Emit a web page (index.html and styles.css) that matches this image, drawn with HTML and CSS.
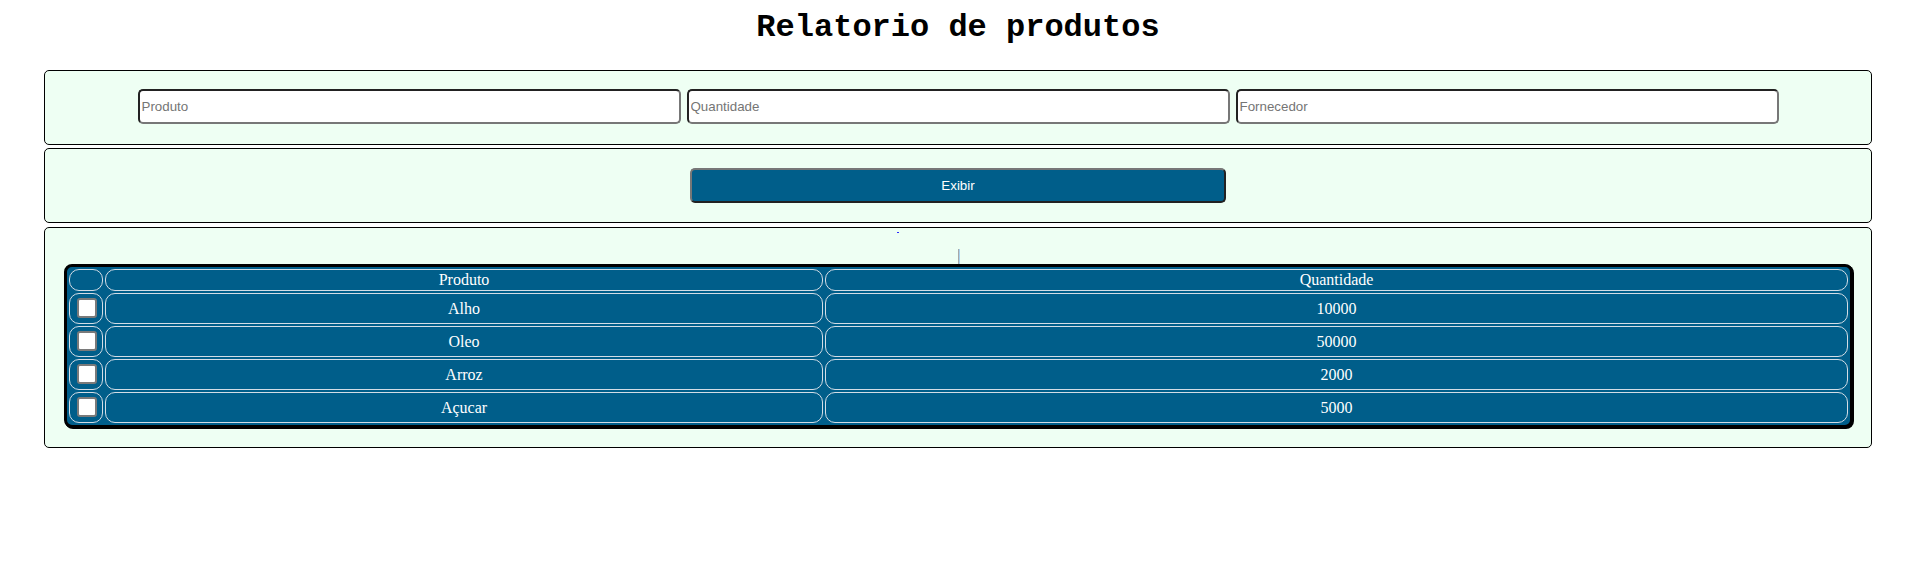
FILE: index.html
```html
<!DOCTYPE html>
<html lang="pt">
<head>
<meta charset="utf-8">
<title>Relatorio de produtos</title>
<link rel="stylesheet" href="styles.css">
</head>
<body>
<div class="page">
  <h1 class="title">Relatorio de produtos</h1>
  <div class="panel panel-inputs">
    <input class="field" type="text" placeholder="Produto">
    <input class="field" type="text" placeholder="Quantidade">
    <input class="field" type="text" placeholder="Fornecedor">
  </div>
  <div class="panel panel-action">
    <button class="btn" type="button">Exibir</button>
  </div>
  <div class="panel panel-table">
    <span class="dot"></span>
    <div class="marker"></div>
    <table class="grid">
      <thead>
        <tr>
          <th class="col-check"></th>
          <th class="col-prod">Produto</th>
          <th>Quantidade</th>
        </tr>
      </thead>
      <tbody>
        <tr><td><input class="check" type="checkbox"></td><td>Alho</td><td>10000</td></tr>
        <tr><td><input class="check" type="checkbox"></td><td>Oleo</td><td>50000</td></tr>
        <tr><td><input class="check" type="checkbox"></td><td>Arroz</td><td>2000</td></tr>
        <tr><td><input class="check" type="checkbox"></td><td>Açucar</td><td>5000</td></tr>
      </tbody>
    </table>
  </div>
</div>
</body>
</html>
```
FILE: styles.css
```css
body {
  margin: 0;
  background: #ffffff;
  font-family: "Liberation Serif", "Times New Roman", serif;
}

.page {
  margin: 0 38px 0 44px;
}

.title {
  margin: 0;
  padding-top: 10px;
  text-align: center;
  font-family: "Liberation Mono", "Courier New", monospace;
  font-size: 32px;
  font-weight: bold;
  line-height: 36px;
  color: #000;
}

.panel {
  border: 1px solid #000;
  border-radius: 5px;
  background: #eefff3;
}

.panel-inputs {
  margin-top: 24px;
  padding: 18px 0 20px;
  display: flex;
  justify-content: center;
  gap: 6px;
}

.field {
  width: 543px;
  height: 35px;
  box-sizing: border-box;
  margin: 0;
  padding: 1px 2px;
  border: 2px solid;
  border-color: #222 #777 #777 #222;
  border-radius: 5px;
  background: #fff;
  font: 13.333px "Liberation Sans", Arial, sans-serif;
  color: #000;
}

.field::placeholder {
  color: #757575;
}

.panel-action {
  margin-top: 3px;
  padding: 19px 0;
  display: flex;
  justify-content: center;
}

.btn {
  width: 536px;
  height: 35px;
  box-sizing: border-box;
  margin: 0;
  border: 2px solid;
  border-color: #777 #222 #222 #777;
  border-radius: 5px;
  background: #005e8a;
  color: #fff;
  font: 13.333px "Liberation Sans", Arial, sans-serif;
}

.panel-table {
  margin-top: 4px;
  padding: 4px 18px 19px 19px;
}

.dot {
  display: block;
  width: 2px;
  height: 1px;
  margin-left: 833px;
  background: #2a2aff;
}

.marker {
  width: 1px;
  height: 15px;
  margin: 16px auto 0;
  border-left: 1px solid #a8a8a8;
  background: #a9d3ee;
}

.grid {
  width: 100%;
  table-layout: fixed;
  border-collapse: separate;
  border-spacing: 2px;
  border: 3px solid #000;
  border-radius: 8px;
  box-shadow: 1px 1px 0 #000;
  background: #005e8a;
  color: #fff;
  font-size: 16px;
}

.grid th,
.grid td {
  padding: 0;
  border: 1px solid #d3dde6;
  border-radius: 10px;
  text-align: center;
  font-weight: normal;
}

.grid th {
  line-height: 20px;
}

.grid td {
  line-height: 29px;
}

.col-check {
  width: 32px;
}

.col-prod {
  width: 716px;
}

.check {
  appearance: none;
  display: block;
  width: 20px;
  height: 20px;
  box-sizing: border-box;
  margin: 4px 0 5px 7px;
  border: 2px solid #7a7a7a;
  border-radius: 3px;
  background: #fff;
}
```
